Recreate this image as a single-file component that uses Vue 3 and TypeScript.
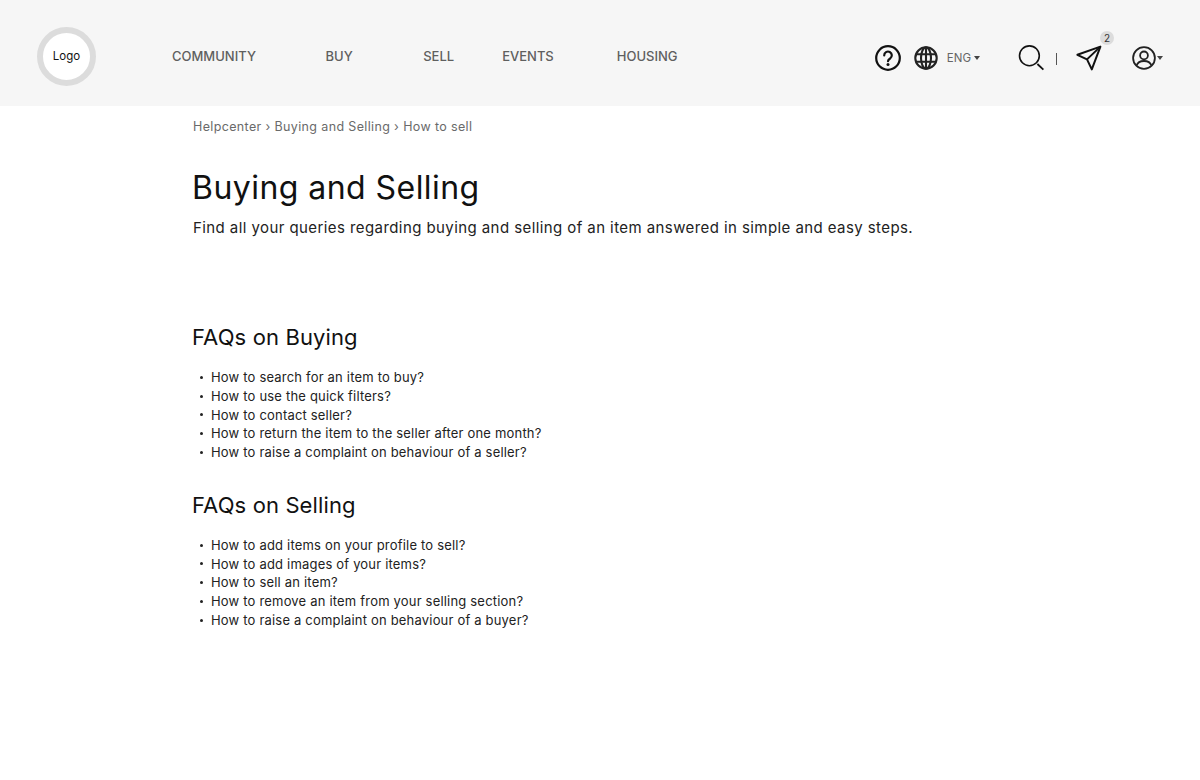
<template>
  <div class="page">
    <header class="topbar">
      <div class="logo"><span>Logo</span></div>
      <nav class="nav">
        <a v-for="item in navItems" :key="item" class="nav-link" :class="`nav-${item.toLowerCase()}`">{{ item }}</a>
      </nav>
      <div class="actions">
        <svg class="ic-help" width="28" height="28" viewBox="0 0 28 28" fill="none" stroke="#111" stroke-width="2.2">
          <circle cx="14" cy="14" r="11.8" />
          <path d="M10.2 11.4a3.800 3.800 0 1 1 5.900 3.100c-1.300.8-2.100 1.300-2.100 2.700" stroke-linecap="round" />
          <circle cx="14" cy="20.400" r="1.500" fill="#111" stroke="none" />
        </svg>
        <svg class="ic-globe" width="24" height="24" viewBox="0 0 24 24" fill="none" stroke="#222" stroke-width="2.1">
          <circle cx="12" cy="12" r="10.700" />
          <ellipse cx="12" cy="12" rx="5" ry="10.700" />
          <path d="M12 1.200v21.600M2 8.300h20M2 15.700h20" />
        </svg>
        <span class="lang">ENG</span>
        <i class="caret lang-caret"></i>
        <svg class="ic-search" width="26" height="26" viewBox="0 0 26 26" fill="none" stroke="#111">
          <circle cx="11.400" cy="10.800" r="9.900" stroke-width="1.600" />
          <path d="M19.400 19l6 5.600" stroke-width="1.800" />
        </svg>
        <span class="divider"></span>
        <span class="send">
          <svg width="26" height="26" viewBox="0 0 26 26" fill="none" stroke="#111" stroke-width="2" stroke-linejoin="round">
            <path d="M24.400 1.600L1.400 9.800l9.600 4.600 4.800 10z" />
            <path d="M11 14.400L24.400 1.600" />
          </svg>
          <b class="badge">2</b>
        </span>
        <svg class="ic-user" width="24" height="24" viewBox="0 0 24 24" fill="none" stroke="#222" stroke-width="1.800">
          <circle cx="12" cy="12" r="10.900" />
          <circle cx="12" cy="9.400" r="3.900" />
          <path d="M4.600 19.600c1-3.200 3.600-4.600 7.400-4.600s6.400 1.400 7.400 4.600" />
        </svg>
        <i class="caret user-caret"></i>
      </div>
    </header>

    <main class="content">
      <p class="crumbs">Helpcenter › Buying and Selling › How to sell</p>
      <h1>Buying and Selling</h1>
      <p class="lead">Find all your queries regarding buying and selling of an item answered in simple and easy steps.</p>

      <section v-for="group in faqs" :key="group.title" class="faq">
        <h2>{{ group.title }}</h2>
        <ul>
          <li v-for="q in group.items" :key="q">{{ q }}</li>
        </ul>
      </section>
    </main>
  </div>
</template>

<script setup lang="ts">
const navItems: string[] = ['COMMUNITY', 'BUY', 'SELL', 'EVENTS', 'HOUSING']

const faqs = [
  {
    title: 'FAQs on Buying',
    items: [
      'How to search for an item to buy?',
      'How to use the quick filters?',
      'How to contact seller?',
      'How to return the item to the seller after one month?',
      'How to raise a complaint on behaviour of a seller?',
    ],
  },
  {
    title: 'FAQs on Selling',
    items: [
      'How to add items on your profile to sell?',
      'How to add images of your items?',
      'How to sell an item?',
      'How to remove an item from your selling section?',
      'How to raise a complaint on behaviour of a buyer?',
    ],
  },
]
</script>

<style>
html,
body {
  background: #fff;
}
</style>

<style scoped>
.page {
  min-height: 780px;
  font-family: Inter, 'Liberation Sans', sans-serif;
  color: #111;
}

.topbar {
  display: flex;
  align-items: flex-start;
  height: 106px;
  padding-left: 37px;
  box-sizing: border-box;
  background: #f6f6f6;
}

.logo {
  display: flex;
  align-items: center;
  justify-content: center;
  width: 59px;
  height: 59px;
  margin-top: 27px;
  padding-bottom: 1px;
  box-sizing: border-box;
  border: 6px solid #dcdcdc;
  border-radius: 50%;
  background: #fff;
  font-size: 11.5px;
}

.nav {
  display: flex;
  margin: 48px 0 0 76px;
}

.nav-link {
  font-size: 13px;
  line-height: 17px;
  font-weight: 500;
  color: #5f5f5f;
}

.nav-buy {
  margin-left: 69.5px;
}

.nav-sell {
  margin-left: 70.5px;
}

.nav-events {
  margin-left: 48px;
}

.nav-housing {
  margin-left: 63px;
}

.actions {
  position: relative;
  display: flex;
  align-items: center;
  height: 28px;
  margin: 44px 0 0 auto;
  padding-right: 37px;
}

.ic-help {
  margin-right: 12px;
}

.lang {
  margin-left: 9px;
  font-size: 11.5px;
  color: #666;
}

.caret {
  width: 0;
  height: 0;
  border-left: 3.5px solid transparent;
  border-right: 3.5px solid transparent;
  border-top: 4px solid #444;
}

.lang-caret {
  margin: 0 38px 0 3px;
}

.divider {
  width: 1px;
  height: 12px;
  margin: 1px 19px 0 12px;
  background: #555;
}

.send {
  position: relative;
  display: flex;
  margin-right: 30px;
}

.badge {
  position: absolute;
  top: -14px;
  left: 24px;
  width: 14px;
  height: 14px;
  border-radius: 50%;
  background: #dcdcdc;
  font-size: 10px;
  font-weight: 400;
  line-height: 14px;
  text-align: center;
  color: #333;
}

.user-caret {
  margin-left: 1px;
}

.content {
  padding-left: 192px;
}

.crumbs {
  margin: 13px 0 0 1px;
  font-size: 12.5px;
  line-height: 16px;
  letter-spacing: 0.36px;
  color: #6a6a6a;
}

h1 {
  margin: 31px 0 0;
  font-size: 32px;
  line-height: 44px;
  font-weight: 400;
  letter-spacing: 0.45px;
  color: #111;
}

.lead {
  margin: 7px 0 0 1px;
  font-size: 15px;
  line-height: 22px;
  letter-spacing: 0.42px;
  color: #222;
}

.faq {
  margin-top: 28px;
}

.faq:first-of-type {
  margin-top: 83px;
}

h2 {
  margin: 0;
  font-size: 22px;
  line-height: 30px;
  font-weight: 400;
  letter-spacing: 0.12px;
  color: #111;
}

ul {
  margin: 16px 0 0;
  padding: 0 0 0 8px;
  list-style: none;
  font-size: 13px;
  line-height: 18.75px;
  letter-spacing: 0.19px;
  color: #222;
}

li {
  display: flex;
  align-items: center;
}

li::before {
  content: '';
  flex: none;
  width: 3px;
  height: 3px;
  margin-right: 8px;
  border-radius: 50%;
  background: #222;
}
</style>
